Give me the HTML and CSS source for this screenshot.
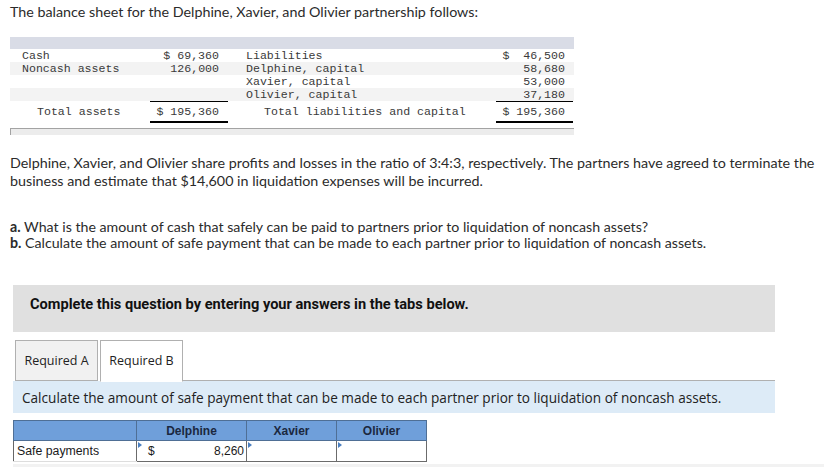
FILE: index.html
```html
<!DOCTYPE html>
<html>
<head>
<meta charset="utf-8">
<link rel="stylesheet" href="styles.css">
</head>
<body>
<div class="page">
  <p class="title">The balance sheet for the Delphine, Xavier, and Olivier partnership follows:</p>

  <div class="bs">
    <div class="bs-head"></div>
    <div class="bs-row">
      <span class="c1">Cash</span><span class="c2">$ 69,360</span><span class="c3">Liabilities</span><span class="c4">$  46,500</span>
    </div>
    <div class="bs-row alt">
      <span class="c1">Noncash assets</span><span class="c2">126,000</span><span class="c3">Delphine, capital</span><span class="c4">58,680</span>
    </div>
    <div class="bs-row">
      <span class="c1"></span><span class="c2"></span><span class="c3">Xavier, capital</span><span class="c4">53,000</span>
    </div>
    <div class="bs-row alt">
      <span class="c1"></span><span class="c2"></span><span class="c3">Olivier, capital</span><span class="c4">37,180</span>
    </div>
    <div class="bs-row total">
      <span class="c1 ind">Total assets</span><span class="c2 sum">$ 195,360</span><span class="c3 ind">Total liabilities and capital</span><span class="c4 sum">$ 195,360</span>
    </div>
    <div class="bs-foot"></div>
  </div>

  <p class="para">Delphine, Xavier, and Olivier share profits and losses in the ratio of 3:4:3, respectively. The partners have agreed to terminate the business and estimate that $14,600 in liquidation expenses will be incurred.</p>

  <p class="qs"><b>a.</b> What is the amount of cash that safely can be paid to partners prior to liquidation of noncash assets?<br><b>b.</b> Calculate the amount of safe payment that can be made to each partner prior to liquidation of noncash assets.</p>

  <div class="notice">Complete this question by entering your answers in the tabs below.</div>

  <div class="tabs">
    <div class="tab">Required A</div>
    <div class="tab active">Required B</div>
    <div class="tab-rest"></div>
  </div>
  <div class="panel">Calculate the amount of safe payment that can be made to each partner prior to liquidation of noncash assets.</div>

  <table class="ans">
    <tr class="hrow">
      <th class="lab"></th>
      <th class="w1">Delphine</th>
      <th class="w2">Xavier</th>
      <th class="w2">Olivier</th>
    </tr>
    <tr class="brow">
      <td class="lab">Safe payments</td>
      <td class="inp"><span class="mark"></span><span class="cur">$</span><span class="val">8,260</span></td>
      <td class="inp"><span class="mark"></span></td>
      <td class="inp"><span class="mark"></span></td>
    </tr>
  </table>
  <div class="foot-line"></div>
</div>
</body>
</html>
```

FILE: styles.css
```css
html, body {
  margin: 0;
  padding: 0;
  background: #ffffff;
}

.page {
  width: 824px;
  font-family: Lato, "Open Sans", sans-serif;
  color: #2b2b2b;
}

.title {
  margin: 3px 0 0 10px;
  font-size: 14.3px;
  line-height: 17px;
}

/* balance sheet */
.bs {
  margin: 17px 0 0 10px;
  width: 564px;
  font-family: "Liberation Mono", "DejaVu Sans Mono", monospace;
  font-size: 11.6px;
  color: #3a3a3a;
}

.bs-head {
  height: 12px;
  background: #d9dce6;
}

.bs-row {
  display: grid;
  grid-template-columns: 140px 78px 18px 250px 77px 1fr;
  height: 13px;
  line-height: 13px;
  white-space: pre;
}

.bs-row span:nth-child(1) { grid-column: 1; }
.bs-row span:nth-child(2) { grid-column: 2; }
.bs-row span:nth-child(3) { grid-column: 4; }
.bs-row span:nth-child(4) { grid-column: 5; }

.bs-row.alt {
  background: #f3f3f3;
}

.c1 { padding-left: 12px; }
.c3 { padding-left: 0; }
.c2 { text-align: right; padding-right: 9px; }
.c4 { text-align: right; padding-right: 8px; }

.bs-row.total {
  height: 22px;
  line-height: 21px;
  background: #ffffff;
}

.c1.ind { padding-left: 27px; }
.c3.ind { padding-left: 18px; }

.sum {
  border-top: 1px solid #000;
  border-bottom: 2px solid #000;
  height: 19px;
  line-height: 19px;
}

.bs-foot {
  margin-top: 5px;
  height: 6px;
  background: #ececec;
  border-top: 1px solid #a3a3a3;
  border-left: 1px solid #a3a3a3;
}

.para {
  margin: 19px 0 0 10px;
  font-size: 14.3px;
  line-height: 18px;
}

.qs {
  margin: 29px 0 0 10px;
  font-size: 14.2px;
  line-height: 16px;
}

.notice {
  margin: 34px 0 0 13px;
  width: 745px;
  padding: 11px 0 20px 17px;
  background: #e0e0e0;
  font-family: Roboto, "Open Sans", sans-serif;
  font-weight: 700;
  font-size: 14.6px;
  line-height: 16px;
  color: #111;
}

.tabs {
  display: flex;
  margin: 8px 0 0 13px;
  width: 762px;
  height: 41px;
  font-family: "Open Sans", sans-serif;
  font-size: 12.5px;
  color: #222;
}

.tab {
  width: 81px;
  margin-left: 2px;
  height: 39px;
  line-height: 39px;
  text-align: center;
  background: #f1f1f1;
  border: 1px solid #b0b0b0;
}

.tab.active {
  background: #ffffff;
  border-bottom: 1px solid #ffffff;
  height: 40px;
}

.tab-rest {
  flex: 1;
  border-bottom: 1px solid #b0b0b0;
}

.panel {
  margin: 0 0 0 13px;
  width: 753px;
  height: 32px;
  line-height: 33px;
  padding-left: 9px;
  background: #ddebf7;
  font-family: "Open Sans", sans-serif;
  font-size: 13.6px;
  color: #222;
}

.ans {
  margin: 7px 0 0 13px;
  border-collapse: collapse;
  font-family: "Liberation Sans", Arial, sans-serif;
  font-size: 12px;
  color: #1a1a1a;
}

.hrow th {
  height: 19px;
  padding: 0;
  background: #6f9fda;
  border: 1px solid #4f6f95;
  font-weight: 700;
  font-size: 12px;
  color: #1b2840;
}

.hrow th.lab {
  width: 122px;
}

.hrow th.w1 { width: 109px; }
.hrow th.w2 { width: 89px; }

.brow td {
  height: 20px;
  padding: 0;
  position: relative;
}

.brow td.lab {
  border-left: 1px solid #666;
  border-bottom: 1px solid #ddd;
  padding-left: 3px;
  font-size: 12.3px;
}

.brow td.inp {
  border: 1px solid #6b6b6b;
  background: #fff;
}

.mark {
  position: absolute;
  left: 1px;
  top: 1px;
  width: 0;
  height: 0;
  border-top: 3px solid transparent;
  border-bottom: 3px solid transparent;
  border-left: 4px solid #4a7fc0;
}

.cur {
  position: absolute;
  left: 11px;
  top: 3px;
}

.val {
  position: absolute;
  right: 2px;
  top: 3px;
}

.foot-line {
  margin: 2px 0 0 13px;
  height: 4px;
  background: #f2f2f2;
}
```
